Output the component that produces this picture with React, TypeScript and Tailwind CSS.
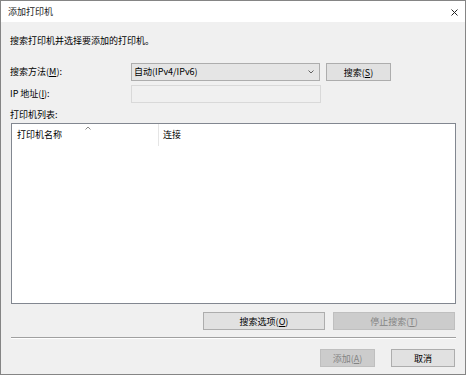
import React from 'react';

const font = { fontFamily: '"Noto Sans CJK SC", "Noto Sans", sans-serif' };

function Key({ k }: { k: string }) {
  return (
    <>
      (<span className="underline underline-offset-1">{k}</span>)
    </>
  );
}

function Btn({
  children,
  disabled,
  className,
}: {
  children: React.ReactNode;
  disabled?: boolean;
  className: string;
}) {
  return (
    <div
      className={
        'h-[18px] flex items-center justify-center border text-[9px] leading-none ' +
        (disabled
          ? 'bg-[#cccccc] border-[#bfbfbf] text-[#838383] '
          : 'bg-[#e1e1e1] border-[#adadad] text-black ') +
        className
      }
    >
      {children}
    </div>
  );
}

export default function App() {
  return (
    <div
      className="w-[466px] h-[375px] border border-[#858585] bg-[#f0f0f0] flex flex-col text-black overflow-hidden"
      style={font}
    >
      <div className="h-[21px] bg-white flex items-center justify-between pl-[7px] pr-[7px] shrink-0">
        <span className="text-[9px] text-[#222]">添加打印机</span>
        <svg width="7" height="7" viewBox="0 0 7 7" className="mt-[2px]">
          <path d="M0.5 0.5L6.5 6.5M6.5 0.5L0.5 6.5" stroke="#222" strokeWidth="1" />
        </svg>
      </div>

      <div className="flex flex-col px-[9px]">
        <div className="h-[16px] mt-[11px] flex items-center text-[9px]">搜索打印机并选择要添加的打印机。</div>

        <div className="flex items-center mt-[14px] h-[18px]">
          <div className="w-[121px] text-[9px]">
            搜索方法<Key k="M" />:
          </div>
          <div className="w-[189px] h-[18px] bg-[#e5e5e5] border border-[#adadad] flex items-center justify-between pl-[2px] pr-[5px] text-[9px]">
            <span>自动(IPv4/IPv6)</span>
            <svg width="6" height="4" viewBox="0 0 6 4">
              <path d="M0.5 0.5L3 3L5.5 0.5" stroke="#606060" fill="none" strokeWidth="1" />
            </svg>
          </div>
          <Btn className="w-[65px] ml-[6px]">
            搜索<Key k="S" />
          </Btn>
        </div>

        <div className="flex items-center mt-[4px] h-[18px]">
          <div className="w-[121px] text-[9px]">
            IP 地址<Key k="I" />:
          </div>
          <div className="w-[190px] h-[18px] bg-[#f0f0f0] border border-[#d9d9d9]" />
        </div>

        <div className="h-[16px] mt-[4px] flex items-center text-[9px]">打印机列表:</div>

        <div className="h-[181px] border border-[#828790] bg-white flex flex-col ml-[1px]">
          <div className="h-[22px] flex text-[9px] relative">
            <div className="w-[147px] pl-[5px] flex items-center border-r border-[#e5e5e5]">打印机名称</div>
            <div className="pl-[4px] flex items-center">连接</div>
            <svg width="6" height="4" viewBox="0 0 6 4" className="absolute left-[73px] top-[2px]">
              <path d="M0.5 3.5L3 1L5.5 3.5" stroke="#888" fill="none" strokeWidth="1" />
            </svg>
          </div>
        </div>

        <div className="flex justify-end gap-[8px] mt-[8px] mr-[1px]">
          <Btn className="w-[122px]">
            搜索选项<Key k="O" />
          </Btn>
          <Btn disabled className="w-[122px]">
            停止搜索<Key k="T" />
          </Btn>
        </div>

        <div className="h-[2px] mt-[7px] ml-[1px] border-t border-[#a0a0a0] border-b border-b-white" />

        <div className="flex justify-end mt-[10px] mr-[1px]">
          <Btn disabled className="w-[55px]">
            添加<Key k="A" />
          </Btn>
          <Btn className="w-[64px] ml-[16px]">取消</Btn>
        </div>
      </div>
    </div>
  );
}
